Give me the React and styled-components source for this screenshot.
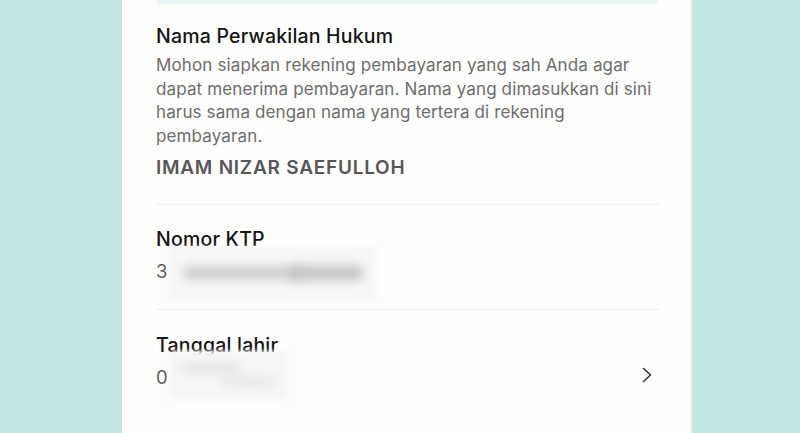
import React from "react";
import styled, { createGlobalStyle } from "styled-components";

const Global = createGlobalStyle`
  html, body { margin: 0; padding: 0; }
  body {
    background: #c2e6e2;
    font-family: Inter, "Noto Sans", "Liberation Sans", sans-serif;
    -webkit-font-smoothing: antialiased;
  }
`;

const Page = styled.div`
  height: 433px;
  overflow: hidden;
  display: flex;
  padding-left: 122px;
  background: #c2e6e2;
`;

const Card = styled.div`
  width: 570px;
  box-sizing: border-box;
  background: #fdfdfc;
  padding: 0 32px 0 34px;
  box-shadow: inset -2px 0 0 #f1f3f2;
`;

const TopStrip = styled.div`
  height: 4px;
  margin-left: 1px;
  margin-right: 2px;
  background: #e9f6f7;
`;

const Section = styled.section`
  display: flex;
  flex-direction: column;
  padding: ${(p) => p.$top}px 0 ${(p) => p.$bottom}px;
  border-bottom: ${(p) => (p.$divider ? "1px solid #efefef" : "none")};
`;

const Title = styled.h3`
  margin: 0;
  font-size: 19.5px;
  line-height: 24px;
  font-weight: 500;
  letter-spacing: 0.2px;
  color: #141414;
`;

const Desc = styled.p`
  margin: 6px 0 0;
  font-size: 17px;
  line-height: 23.5px;
  letter-spacing: 0.13px;
  white-space: nowrap;
  color: #6d6d6d;
`;

const Name = styled.div`
  margin-top: 8px;
  font-size: 19px;
  line-height: 24px;
  font-weight: 600;
  color: #575757;
  letter-spacing: 0.75px;
`;

const ValueRow = styled.div`
  display: flex;
  align-items: center;
  margin-top: 8px;
  height: 24px;
`;

const Value = styled.span`
  font-size: 18.5px;
  line-height: 24px;
  color: #5c5c5c;
`;

const Redaction = styled.div`
  position: relative;
  z-index: 1;
  align-self: flex-start;
  display: flex;
  flex-direction: ${(p) => (p.$row ? "row" : "column")};
  justify-content: center;
  align-items: ${(p) => (p.$row ? "center" : "stretch")};
  gap: ${(p) => p.$gap}px;
  box-sizing: border-box;
  width: ${(p) => p.$w}px;
  height: ${(p) => p.$h}px;
  margin: ${(p) => p.$mt}px 0 0 3px;
  padding: 0 10px;
  background: #f6f6f5;
  filter: blur(2px);
`;

const Smudge = styled.div`
  flex: none;
  width: ${(p) => p.$w}px;
  height: ${(p) => p.$h}px;
  margin-left: ${(p) => p.$l}px;
  border-radius: 8px;
  background: ${(p) => p.$c};
  filter: blur(5px);
`;

const Chevron = styled.svg`
  width: 10px;
  height: 16px;
  margin-left: auto;
  margin-right: 8px;
  margin-top: -4px;
`;

export default function App() {
  return (
    <>
      <Global />
      <Page>
        <Card>
          <TopStrip />
          <Section $top={20} $bottom={24} $divider>
            <Title>Nama Perwakilan Hukum</Title>
            <Desc>
              Mohon siapkan rekening pembayaran yang sah Anda agar
              <br />
              dapat menerima pembayaran. Nama yang dimasukkan di sini
              <br />
              harus sama dengan nama yang tertera di rekening
              <br />
              pembayaran.
            </Desc>
            <Name>IMAM NIZAR SAEFULLOH</Name>
          </Section>
          <Section $top={22} $bottom={26} $divider>
            <Title>Nomor KTP</Title>
            <ValueRow>
              <Value>3</Value>
              <Redaction $row $mt={-12} $w={205} $h={52} $gap={0}>
                <Smudge $l={0} $w={120} $h={12} $c="#cbcbcb" />
                <Smudge $l={-14} $w={74} $h={14} $c="#c2c2c2" />
              </Redaction>
            </ValueRow>
          </Section>
          <Section $top={23} $bottom={20}>
            <Title>Tanggal lahir</Title>
            <ValueRow>
              <Value>0</Value>
              <Redaction $mt={-14} $w={115} $h={48} $gap={4}>
                <Smudge $l={0} $w={60} $h={9} $c="#e2e2e2" />
                <Smudge $l={40} $w={55} $h={9} $c="#e6e6e6" />
              </Redaction>
              <Chevron viewBox="0 0 10 16" fill="none">
                <path
                  d="M1.5 1.5 L8.5 8 L1.5 14.5"
                  stroke="#333"
                  strokeWidth="1.6"
                  strokeLinecap="round"
                  strokeLinejoin="round"
                />
              </Chevron>
            </ValueRow>
          </Section>
        </Card>
      </Page>
    </>
  );
}
